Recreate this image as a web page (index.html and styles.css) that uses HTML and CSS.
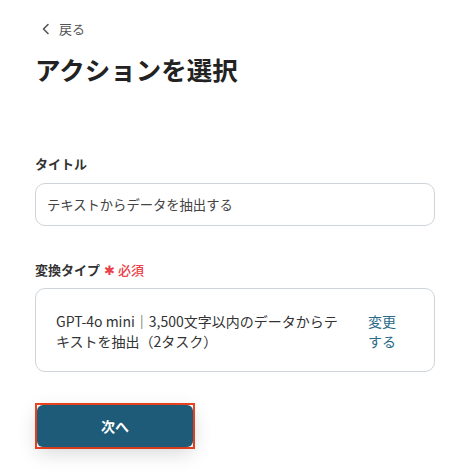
FILE: index.html
```html
<!DOCTYPE html>
<html lang="ja">
<head>
<meta charset="utf-8">
<link rel="stylesheet" href="styles.css">
</head>
<body>
<div class="page">
  <a class="back" href="#"><svg class="chev" width="10" height="12" viewBox="0 0 10 12"><path d="M7 1.5 L2.5 6 L7 10.5" fill="none" stroke="#555" stroke-width="1.6" stroke-linecap="round" stroke-linejoin="round"/></svg><span>戻る</span></a>
  <h1 class="heading">アクションを選択</h1>

  <div class="field field-title">
    <div class="label">タイトル</div>
    <div class="input">テキストからデータを抽出する</div>
  </div>

  <div class="field field-type">
    <div class="label">変換タイプ <span class="req">✱ 必須</span></div>
    <div class="select-box">
      <div class="select-text">GPT-4o mini｜3,500文字以内のデータからテキストを抽出（2タスク）</div>
      <a class="change" href="#">変更する</a>
    </div>
  </div>

  <div class="actions">
    <div class="highlight"><button class="next">次へ</button></div>
  </div>
</div>
</body>
</html>
```

FILE: styles.css
```css
* { box-sizing: border-box; }
html, body { margin: 0; padding: 0; background: #fff; }
body {
  font-family: "Noto Sans CJK JP", "Noto Sans", sans-serif;
  color: #333;
  width: 472px;
  height: 474px;
  overflow: hidden;
}
.page {
  padding: 19px 37px 0 35px;
  display: flex;
  flex-direction: column;
}
.back {
  display: flex;
  align-items: center;
  gap: 8px;
  margin-left: 6px;
  font-size: 13px;
  line-height: 20px;
  color: #555;
  text-decoration: none;
}
.chev { display: block; }
.heading {
  margin: 10px 0 0 0;
  font-size: 25.5px;
  line-height: 40px;
  font-weight: 600;
  color: #222;
}
.field { display: flex; flex-direction: column; }
.field-title { margin-top: 65px; }
.field-type { margin-top: 34px; }
.label {
  font-size: 13px;
  font-weight: 700;
  line-height: 20px;
  color: #333;
}
.req {
  color: #e8434a;
  font-weight: 500;
  font-size: 13px;
  margin-left: 1px;
}
.input {
  margin-top: 9px;
  height: 43px;
  border: 1px solid #cfd4da;
  border-radius: 10px;
  padding: 0 11px;
  display: flex;
  align-items: center;
  font-size: 13.3px;
  color: #444;
}
.select-box {
  margin-top: 8px;
  height: 84px;
  border: 1px solid #cfd4da;
  border-radius: 10px;
  padding: 22px 38px 0 20px;
  display: flex;
  justify-content: space-between;
  gap: 18px;
}
.select-text {
  font-size: 14px;
  line-height: 20px;
  color: #333;
  flex: 1;
}
.change {
  width: 28px;
  font-size: 14px;
  line-height: 20px;
  color: #2a6a87;
  text-decoration: none;
}
.actions {
  margin-top: 31px;
  display: flex;
}
.highlight {
  border: 2px solid #f04420;
  display: flex;
}
.next {
  width: 156px;
  height: 42px;
  border: none;
  border-radius: 6px;
  background: #1e5b78;
  color: #fff;
  font-family: "Noto Sans CJK JP", "Noto Sans", sans-serif;
  font-size: 14px;
  font-weight: 700;
  box-shadow: 0 6px 20px rgba(0,0,0,0.16);
}
```
